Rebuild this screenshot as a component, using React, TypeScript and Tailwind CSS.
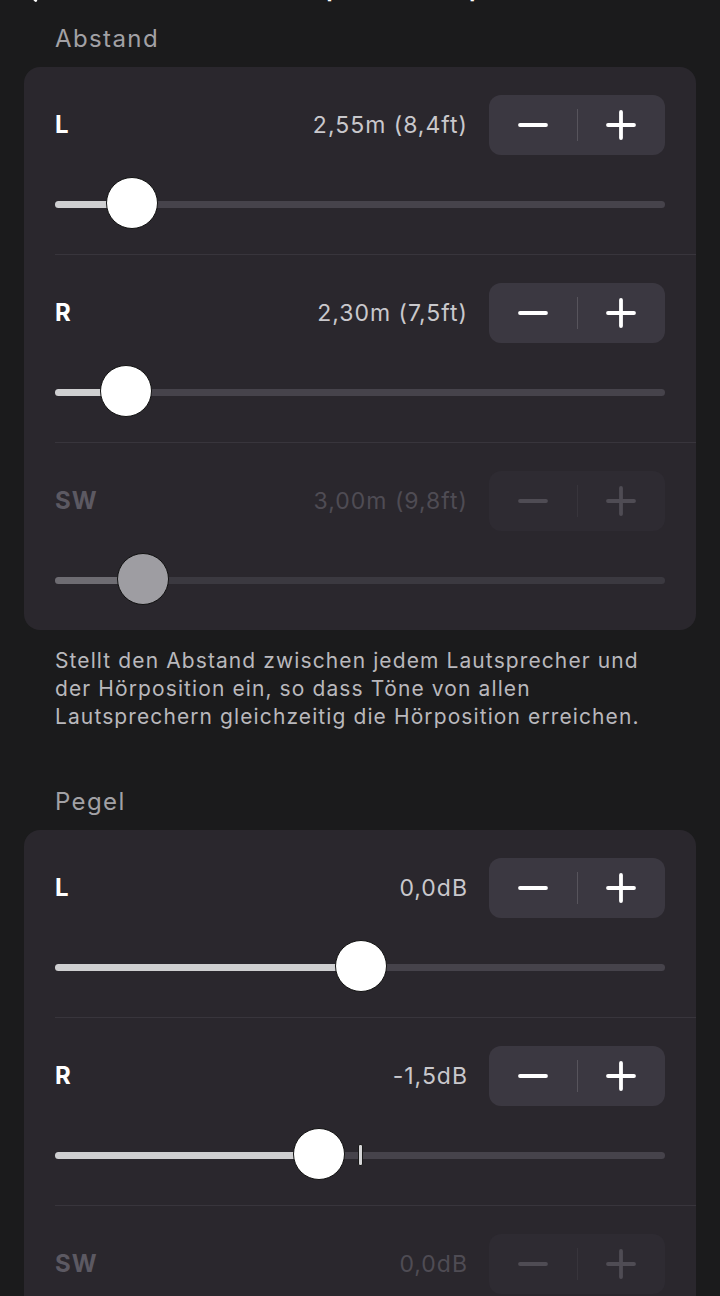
import { ChevronLeft } from 'lucide-react';

type Row = {
  label: string;
  value: string;
  pos: number;
  disabled?: boolean;
  mark?: number;
};

const abstandRows: Row[] = [
  { label: 'L', value: '2,55m (8,4ft)', pos: 0.126 },
  { label: 'R', value: '2,30m (7,5ft)', pos: 0.117 },
  { label: 'SW', value: '3,00m (9,8ft)', pos: 0.145, disabled: true },
];

const pegelRows: Row[] = [
  { label: 'L', value: '0,0dB', pos: 0.502 },
  { label: 'R', value: '-1,5dB', pos: 0.432, mark: 0.5 },
  { label: 'SW', value: '0,0dB', pos: 0.5, disabled: true },
];

const font = { fontFamily: 'Inter, "Noto Sans", sans-serif' };

function Minus({ dim }: { dim?: boolean }) {
  return (
    <svg width="30" height="30" viewBox="0 0 30 30">
      <path d="M2 15h26" stroke={dim ? '#4f4c54' : '#ffffff'} strokeWidth="3.8" strokeLinecap="round" />
    </svg>
  );
}

function Plus({ dim }: { dim?: boolean }) {
  return (
    <svg width="30" height="30" viewBox="0 0 30 30">
      <path d="M2 15h26M15 2v26" stroke={dim ? '#4f4c54' : '#ffffff'} strokeWidth="3.8" strokeLinecap="round" />
    </svg>
  );
}

function Slider({ pos, disabled, mark }: { pos: number; disabled?: boolean; mark?: number }) {
  return (
    <div className="relative h-[52px] mt-[23px]">
      <div
        className={`absolute left-0 right-0 top-[23px] h-[7px] rounded-full ${
          disabled ? 'bg-[#3b3940]' : 'bg-[#46434b]'
        }`}
      />
      <div
        className={`absolute left-0 top-[23px] h-[7px] rounded-full ${
          disabled ? 'bg-[#6e6c72]' : 'bg-[#cfcfd1]'
        }`}
        style={{ width: `${pos * 100}%` }}
      />
      {mark !== undefined && (
        <div
          className="absolute top-[15px] h-[22px] w-[5px] -ml-[2px] rounded-[2px] bg-[#d6d6d8] border border-[#1a1a1a]"
          style={{ left: `${mark * 100}%` }}
        />
      )}
      <div
        className={`absolute -top-[1px] h-[52px] w-[52px] -ml-[26px] rounded-full border-[1.5px] border-[#111] ${
          disabled ? 'bg-[#9e9da2]' : 'bg-white'
        }`}
        style={{ left: `${pos * 100}%` }}
      />
    </div>
  );
}

function SettingRow({ row, last }: { row: Row; last?: boolean }) {
  const d = row.disabled;
  return (
    <div>
      <div className="pl-[31px] pr-[31px] pt-[28px] pb-[24px]">
        <div className="flex items-center h-[60px]">
          <span
            className={`text-[24px] font-bold tracking-[1px] flex-1 ${d ? 'text-[#5c5962]' : 'text-white'}`}
          >
            {row.label}
          </span>
          <span
            className={`text-[23px] tracking-[1px] mr-[21px] ${
              d ? 'text-[#4f4c54]' : 'text-[#c9c8cc]'
            }`}
          >
            {row.value}
          </span>
          <div
            className={`flex items-center w-[176px] h-[60px] rounded-[12px] ${
              d ? 'bg-[#2e2b32]' : 'bg-[#3b3841]'
            }`}
          >
            <div className="flex-1 flex items-center justify-center">
              <Minus dim={d} />
            </div>
            <div className={`w-px h-[32px] ${d ? 'bg-[#38353c]' : 'bg-[#57545c]'}`} />
            <div className="flex-1 flex items-center justify-center">
              <Plus dim={d} />
            </div>
          </div>
        </div>
        <Slider pos={row.pos} disabled={d} mark={row.mark} />
      </div>
      {!last && <div className="ml-[31px] h-px bg-[#38353c]" />}
    </div>
  );
}

export default function App() {
  return (
    <div className="min-h-[1296px] bg-[#1b1b1c] overflow-hidden" style={font}>
      <div className="flex items-end h-[40px] -mt-[34px] px-[22px] text-white">
        <ChevronLeft className="w-[22px] h-[22px]" strokeWidth={3} />
        <span className="text-[22px] font-semibold ml-[8px]">Zurück</span>
        <span className="text-[22px] font-bold ml-[140px]">Lautsprecher-Setup</span>
      </div>

      <div className="pt-[19px]">
        <div className="pl-[55px] text-[24px] tracking-[1.4px] leading-[28px] text-[#a2a1a5] mb-[14px]">
          Abstand
        </div>
        <div className="mx-[24px] rounded-[16px] bg-[#2a272d]">
          {abstandRows.map((r, i) => (
            <SettingRow key={r.label} row={r} last={i === abstandRows.length - 1} />
          ))}
        </div>
        <p className="mt-[17px] pl-[55px] pr-[40px] text-[21px] leading-[28px] text-[#b9b8bc] tracking-[1.1px]">
          Stellt den Abstand zwischen jedem Lautsprecher und der Hörposition ein, so dass Töne von allen
          Lautsprechern gleichzeitig die Hörposition erreichen.
        </p>

        <div className="mt-[57px] pl-[55px] text-[24px] tracking-[1.4px] leading-[28px] text-[#a2a1a5] mb-[14px]">
          Pegel
        </div>
        <div className="mx-[24px] rounded-[16px] bg-[#2a272d]">
          {pegelRows.map((r, i) => (
            <SettingRow key={r.label} row={r} last={i === pegelRows.length - 1} />
          ))}
        </div>
      </div>
    </div>
  );
}
